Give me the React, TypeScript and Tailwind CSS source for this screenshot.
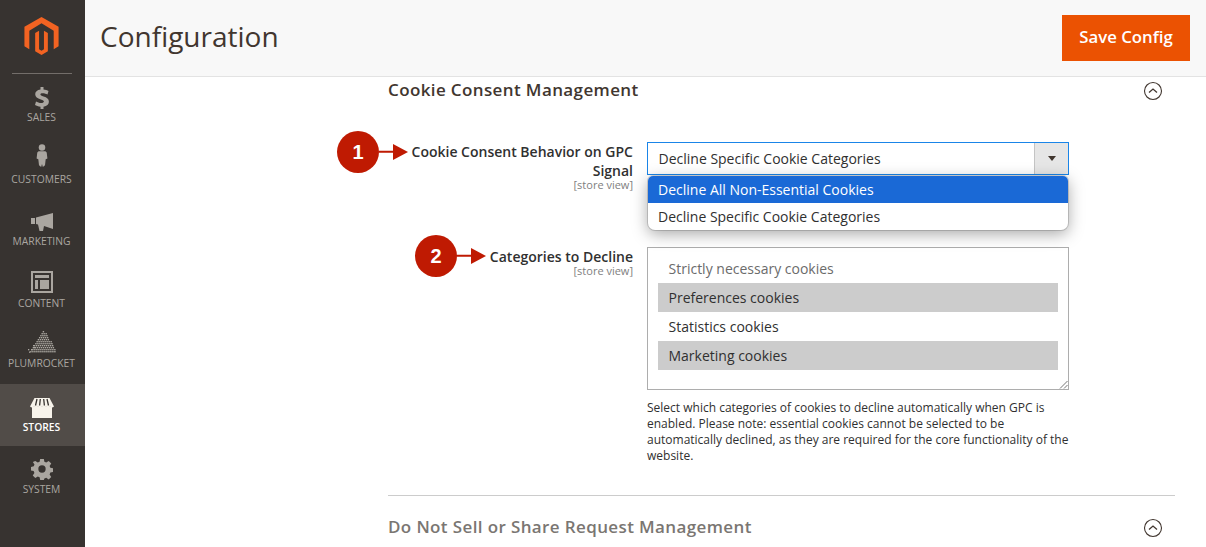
import { ReactNode } from "react";

const font = "font-['Open_Sans',sans-serif]";

function MagentoLogo() {
  return (
    <svg width="36" height="40" viewBox="24 17 36 40" fill="#f26322">
      <path d="M41.5 17 59 27v20l-5 3V31l-12.500-7.500L29 31v19l-5-3V27z" />
      <path d="M35 33.500l4-2.500v19l2.500 1.500L44 50V31l4 2.500V52l-6.500 4-6.500-4z" />
    </svg>
  );
}

function SalesIcon() {
  return (
    <svg width="24" height="24" viewBox="0 0 24 24" fill="#aaa6a0">
      <path d="M10.500 1h3v2.600c2 .2 3.800.8 5 1.500l-1 3.400c-1.300-.7-3-1.300-4.800-1.300-1.500 0-2.300.5-2.300 1.300 0 .9 1 1.300 3.200 2 3.300 1 5.300 2.400 5.300 5.200 0 2.600-1.900 4.500-5.400 5V23h-3v-2.300c-2.200-.1-4.200-.8-5.500-1.600l1-3.500c1.400.8 3.300 1.500 5.200 1.500 1.600 0 2.700-.6 2.700-1.500s-.9-1.400-3-2.100C7.400 12.500 5.200 11 5.200 8.300c0-2.400 1.800-4.300 5.300-4.800z" />
    </svg>
  );
}

function CustomersIcon() {
  return (
    <svg width="12" height="24" viewBox="0 0 14 28" fill="#aaa6a0" className="mb-[4px]">
      <circle cx="7" cy="4" r="3.800" />
      <path d="M3 8.500h8l1.500 1.500.8 7-2 .7-.8 7-2.500 2-1-3.500-1 3.500-2.500-2-.8-7-2-.7.800-7z" />
    </svg>
  );
}

function MarketingIcon() {
  return (
    <svg width="22" height="18" viewBox="0 0 22 18" fill="#aaa6a0" className="mb-[3px]">
      <path d="M0 5h4v6H0zM5 4.500 22 0v16l-9-3-1 5H8.500L7 11.500 5 11z" />
    </svg>
  );
}

function ContentIcon() {
  return (
    <svg width="22" height="22" viewBox="0 0 22 22" fill="none" stroke="#aaa6a0" className="mb-[3px]">
      <rect x="1" y="1" width="20" height="20" strokeWidth="2" />
      <path d="M4 5.500h14" strokeWidth="3" />
      <path d="M5.500 9v9" strokeWidth="3" />
      <rect x="9" y="9" width="9" height="9" fill="#aaa6a0" stroke="none" />
    </svg>
  );
}

function PlumrocketIcon() {
  const dots: ReactNode[] = [];
  for (let row = 0; row < 11; row++) {
    const half = 0.8 + row * 1.25;
    for (let x = -half; x <= half; x += 2) {
      dots.push(<rect key={`${row}-${x}`} x={15.500 + x} y={row * 2} width="1.400" height="1.400" />);
    }
  }
  return (
    <svg width="28" height="22" viewBox="0 0 28 22" fill="#aaa6a0" className="mb-[3px]">
      {dots}
      <rect x="5" y="14" width="1.300" height="1.300" />
      <rect x="0" y="18" width="1.300" height="1.300" />
      <rect x="3" y="18" width="1.300" height="1.300" />
      <rect x="6" y="16" width="1.300" height="1.300" />
      <rect x="1" y="20.500" width="1.300" height="1.300" />
    </svg>
  );
}

function StoresIcon() {
  return (
    <svg width="24" height="20" viewBox="0 1 24 20" className="mb-[2px]">
      <path d="M2 9.500h20V21H2z" fill="#f7f3eb" />
      <path d="M4.500 1h15L24 9.500q-2 2-4 0-2 2-4 0-2 2-4 0-2 2-4 0-2 2-4 0-2 2-4 0z" fill="#f7f3eb" />
      <path d="M7 2 5.500 8.500M10.300 2l-.7 6.500M13.700 2l.7 6.500M17 2l1.500 6.500" stroke="#373330" strokeWidth="1.300" />
    </svg>
  );
}

function SystemIcon() {
  return (
    <svg width="22" height="22" viewBox="0 0 24 24" fill="#aaa6a0" className="mb-[2px]">
      <path
        fillRule="evenodd"
        d="M10 1h4l.6 3.200 2 .8L19.300 3.200l2.800 2.800-1.800 2.700.8 2 3.100.6v4l-3.100.6-.8 2 1.800 2.700-2.800 2.800-2.700-1.800-2 .8L14 24h-4l-.6-3.100-2-.8-2.700 1.800L1.900 19l1.800-2.700-.8-2L0 13.700v-4l3-.6.8-2L2 4.300 4.700 3.200l2.700 1.800 2-.8zM12 8a4 4 0 1 0 0 8 4 4 0 0 0 0-8z"
      />
    </svg>
  );
}

const navItems = [
  { label: "SALES", icon: <SalesIcon /> },
  { label: "CUSTOMERS", icon: <CustomersIcon /> },
  { label: "MARKETING", icon: <MarketingIcon /> },
  { label: "CONTENT", icon: <ContentIcon /> },
  { label: "PLUMROCKET", icon: <PlumrocketIcon />, short: true },
  { label: "STORES", icon: <StoresIcon />, active: true },
  { label: "SYSTEM", icon: <SystemIcon /> },
];

function Sidebar() {
  return (
    <aside className="flex w-[85px] shrink-0 flex-col bg-[#373330]">
      <div className="flex h-[74px] flex-col items-center pt-[17px] pr-[2px]">
        <MagentoLogo />
        <div className="mt-[17px] h-px w-[60px] bg-[#736e6a]" />
      </div>
      {navItems.map((item) =>
        item.active ? (
          <div key={item.label} className="flex h-[62px] flex-col items-center bg-[#514c48] pr-[2px] text-white">
            <div className="flex h-[36px] items-end">{item.icon}</div>
            <span className="text-[10.300px] leading-[14px] font-semibold">{item.label}</span>
          </div>
        ) : (
          <div key={item.label} className="flex h-[62px] flex-col items-center pr-[2px] text-[#aaa6a0]">
            <div className={item.short ? "flex h-[34px] items-end" : "flex h-[36px] items-end"}>{item.icon}</div>
            <span className="text-[10.300px] leading-[14px]">{item.label}</span>
          </div>
        ),
      )}
    </aside>
  );
}

function Chevron() {
  return (
    <svg width="20" height="20" viewBox="0 0 20 20" fill="none" stroke="#41362f" className="mt-[2px] mr-[12.500px]">
      <circle cx="10" cy="10" r="8.500" strokeWidth="1.100" />
      <path d="M6 11.500 10 8l4 3.500" strokeWidth="1.300" />
    </svg>
  );
}

// numbered red callout with its arrow, sits over the label column
function Callout({ n, className }: { n: number; className: string }) {
  return (
    <div className={`absolute flex items-center ${className}`}>
      <div className="flex h-[42px] w-[42px] items-center justify-center rounded-full bg-[#bf1a02] text-[20px] font-bold text-white font-['Liberation_Sans',sans-serif]">
        {n}
      </div>
      <svg width="30" height="16" viewBox="0 0 30 16" fill="#bf1a02">
        <path d="M0 6.800h16V8.800H0zM14 0 29 8l-15 8z" />
      </svg>
    </div>
  );
}

function StoreViewTag() {
  return <div className="text-[11px] leading-[9px] text-[#808080]">[store view]</div>;
}

export default function App() {
  return (
    <div className={`flex h-[547px] w-[1206px] overflow-hidden bg-white text-[#303030] ${font}`}>
      <Sidebar />
      <main className="min-w-0 flex-1">
        <header className="flex h-[77px] items-start justify-between border-b border-[#e3e3e3] bg-[#f8f8f8] pt-[15px] pr-[16px] pl-[15px]">
          <h1 className="mt-[2px] text-[28px] leading-[38px] text-[#41362f]">Configuration</h1>
          <button className="h-[46px] w-[128px] bg-[#eb5202] pb-[2px] text-[16.800px] font-semibold text-white">
            Save Config
          </button>
        </header>

        <div className="mr-[31px] ml-[303px]">
          <div className="flex h-[26px] items-center justify-between">
            <h2 className="text-[17px] font-semibold tracking-[0.38px] text-[#41362f]">
              Cookie Consent Management
            </h2>
            <Chevron />
          </div>

          <div className="mt-[39px] flex gap-[14px]">
            <div className="relative w-[245px] text-right">
              <Callout n={1} className="top-[-11px] left-[-51px]" />
              <div className="text-[14px] leading-[19px] font-semibold">
                Cookie Consent Behavior on GPC Signal
              </div>
              <StoreViewTag />
            </div>
            <div className="relative w-[422px]">
              <div className="flex h-[33px] border border-[#1a85e8]">
                <div className="flex-1 pl-[10.500px] text-[14px] leading-[32px]">
                  Decline Specific Cookie Categories
                </div>
                <div className="flex w-[34px] items-center justify-center border-l border-[#c4c4c4] bg-[#e6e6e6]">
                  <div className="h-0 w-0 border-x-[4px] border-t-[5px] border-x-transparent border-t-[#41362f]" />
                </div>
              </div>
              <ul className="absolute top-[34px] right-[1px] left-[1px] z-10 overflow-hidden rounded-b-[7px] rounded-t-[5px] bg-white text-[14px] leading-[27px] shadow-[0_4px_16px_rgba(0,0,0,0.35)] ring-1 ring-black/15">
                <li className="h-[27px] bg-[#1a69d6] pl-[10px] text-white">Decline All Non-Essential Cookies</li>
                <li className="h-[27px] pl-[10px]">Decline Specific Cookie Categories</li>
              </ul>
            </div>
          </div>

          <div className="mt-[58px] flex gap-[14px]">
            <div className="relative w-[245px] text-right">
              <Callout n={2} className="top-[-12px] left-[27px]" />
              <div className="text-[14px] leading-[19px] font-semibold">Categories to Decline</div>
              <StoreViewTag />
            </div>
            <div className="w-[422px]">
              <div className="relative h-[143px] border border-[#adadad] px-[10px] pt-[6px] text-[14px] leading-[29px]">
                <div className="h-[29px] pl-[10.500px] text-[#6b6b6b]">Strictly necessary cookies</div>
                <div className="h-[29px] bg-[#cccccc] pl-[10.500px]">Preferences cookies</div>
                <div className="h-[29px] pl-[10.500px]">Statistics cookies</div>
                <div className="h-[29px] bg-[#cccccc] pl-[10.500px]">Marketing cookies</div>
                <svg width="9" height="9" viewBox="0 0 9 9" stroke="#777" className="absolute right-0 bottom-0">
                  <path d="M1 8.500 8.500 1M5 8.500 8.500 5" />
                </svg>
              </div>
              <p className="mt-[10px] text-[12px] leading-[16px]">
                Select which categories of cookies to decline automatically when GPC is enabled. Please note:
                essential cookies cannot be selected to be automatically declined, as they are required for the
                core functionality of the website.
              </p>
            </div>
          </div>

          <div className="mt-[31px] flex h-[63px] items-center justify-between border-t border-[#cccccc]">
            <h2 className="text-[17px] font-semibold tracking-[0.38px] text-[#7a7672]">
              Do Not Sell or Share Request Management
            </h2>
            <Chevron />
          </div>
        </div>
      </main>
    </div>
  );
}
